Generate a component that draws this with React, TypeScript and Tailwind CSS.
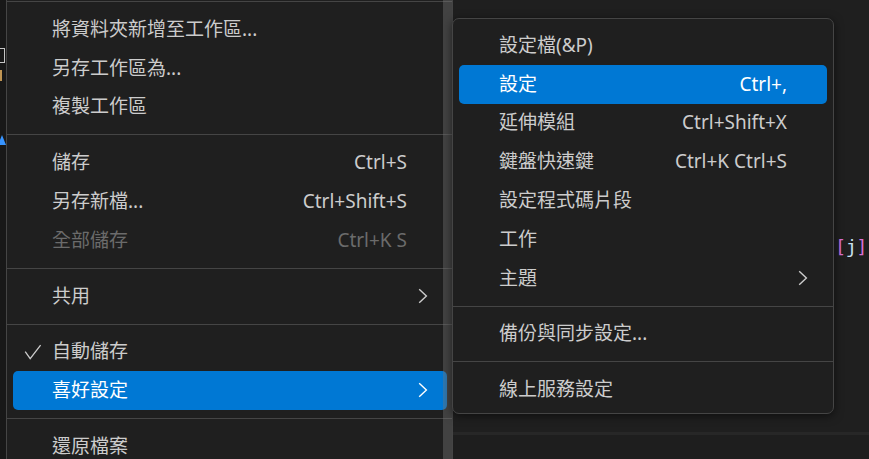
import clsx from 'clsx';

type Row =
    | { kind: 'sep' }
    | { kind: 'item'; label: string; shortcut?: string; sub?: boolean; checked?: boolean; disabled?: boolean; active?: boolean };

const fileMenu: Row[] = [
    { kind: 'item', label: '將資料夾新增至工作區...' },
    { kind: 'item', label: '另存工作區為...' },
    { kind: 'item', label: '複製工作區' },
    { kind: 'sep' },
    { kind: 'item', label: '儲存', shortcut: 'Ctrl+S' },
    { kind: 'item', label: '另存新檔...', shortcut: 'Ctrl+Shift+S' },
    { kind: 'item', label: '全部儲存', shortcut: 'Ctrl+K S', disabled: true },
    { kind: 'sep' },
    { kind: 'item', label: '共用', sub: true },
    { kind: 'sep' },
    { kind: 'item', label: '自動儲存', checked: true },
    { kind: 'item', label: '喜好設定', sub: true, active: true },
    { kind: 'sep' },
    { kind: 'item', label: '還原檔案' },
];

const prefsMenu: Row[] = [
    { kind: 'item', label: '設定檔(&P)' },
    { kind: 'item', label: '設定', shortcut: 'Ctrl+,', active: true },
    { kind: 'item', label: '延伸模組', shortcut: 'Ctrl+Shift+X' },
    { kind: 'item', label: '鍵盤快速鍵', shortcut: 'Ctrl+K Ctrl+S' },
    { kind: 'item', label: '設定程式碼片段' },
    { kind: 'item', label: '工作' },
    { kind: 'item', label: '主題', sub: true },
    { kind: 'sep' },
    { kind: 'item', label: '備份與同步設定...' },
    { kind: 'sep' },
    { kind: 'item', label: '線上服務設定' },
];

function Chevron() {
    return (
        <svg width="10" height="16" viewBox="0 0 10 16" fill="none">
            <path d="M1.2 1.2 L8.4 8 L1.2 14.8" stroke="currentColor" strokeWidth="1.4" />
        </svg>
    );
}

function Check() {
    return (
        <svg width="18" height="16" viewBox="0 0 18 16" fill="none">
            <path d="M1.2 7.6 L6.2 14.6 L16.6 1.2" stroke="currentColor" strokeWidth="1.3" />
        </svg>
    );
}

function MenuRows({ rows, inset, textPad }: { rows: Row[]; inset: string; textPad: string }) {
    return (
        <>
            {rows.map((row, i) =>
                row.kind === 'sep' ? (
                    <div key={i} className="flex h-[17px] items-center">
                        <div className="h-px w-full bg-[#454545]" />
                    </div>
                ) : (
                    <div key={i} className={clsx('h-[38.8px]', inset)}>
                        <div
                            className={clsx(
                                'relative flex h-full items-center rounded-[5px] pr-[40px]',
                                textPad,
                                row.active ? 'bg-[#0078d4] text-white' : row.disabled ? 'text-[#6b6b6b]' : 'text-[#cccccc]'
                            )}
                        >
                            {row.checked && (
                                <span className="absolute left-[11px] top-[11px] flex">
                                    <Check />
                                </span>
                            )}
                            <span className="flex-1 whitespace-nowrap">{row.label}</span>
                            {row.shortcut && <span className="whitespace-nowrap">{row.shortcut}</span>}
                            {row.sub && (
                                <span className="absolute right-[19px] top-[11px] flex">
                                    <Chevron />
                                </span>
                            )}
                        </div>
                    </div>
                )
            )}
        </>
    );
}

export default function App() {
    return (
        <div className="relative flex h-[459px] w-[869px] overflow-hidden bg-[#1f1f1f] font-['Noto_Sans','Noto_Sans_CJK_TC',sans-serif] text-[19px] leading-none">
            {/* activity strip peeking out on the left */}
            <div className="flex w-[6px] shrink-0 flex-col bg-[#181818]">
                <div className="mt-[48px] h-[15px] w-[5px] border-y border-r border-[#c5c5c5]" />
                <div className="mt-[7px] h-[11px] w-[2px] bg-[#c09553]" />
                <div className="ml-[-2px] mt-[54px] h-0 w-0 border-x-[4px] border-b-[10px] border-x-transparent border-b-[#3794ff]" />
            </div>

            {/* File menu */}
            <div className="relative w-[447px] shrink-0 border-x border-[#454545] bg-[#1f1f1f]">
                <div className="pt-px">
                    <div className="h-px w-full bg-[#454545]" />
                </div>
                <div className="pt-[8px]">
                    <MenuRows rows={fileMenu} inset="pl-[6px] pr-[5px]" textPad="pl-[39px]" />
                </div>
                <div className="absolute bottom-0 right-0 top-0 w-[9px] bg-[#79797966]" />
            </div>

            {/* editor behind */}
            <div className="flex flex-1 flex-col">
                <div className="flex-1 pl-[382px] pt-[238px] font-['DejaVu_Sans_Mono',monospace] text-[18.5px] tracking-[-0.5px]">
                    <span className="text-[#da70d6]">[</span>
                    <span className="text-[#c8e1f0]">j</span>
                    <span className="text-[#da70d6]">]</span>
                </div>
                <div className="h-[27px] border-t-[3px] border-[#272727] bg-[#1e1e1e]" />
            </div>

            {/* Preferences submenu */}
            <div className="absolute left-[452px] top-[18px] w-[382px] rounded-[7px] border border-[#454545] bg-[#1f1f1f] pb-[4px] pt-[7px] shadow-[0_2px_10px_rgba(0,0,0,0.55)]">
                <MenuRows rows={prefsMenu} inset="px-[6px]" textPad="pl-[40px]" />
            </div>
        </div>
    );
}
